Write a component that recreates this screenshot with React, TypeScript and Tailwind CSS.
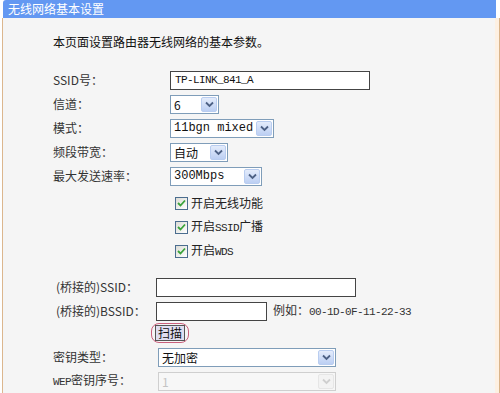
import React from 'react';

const cjk = { fontFamily: '"Noto Sans CJK SC", "Liberation Sans", sans-serif' };
const mono = { fontFamily: '"Liberation Mono", "Noto Sans CJK SC", monospace' };

function Arrow({ disabled = false }: { disabled?: boolean }) {
  return (
    <div
      className={`w-[16px] self-stretch m-[1px] flex items-center justify-center rounded-[2px] border ${
        disabled ? 'border-[#e6e6e6] bg-[#f3f3f3]' : 'border-[#b9cdf0] bg-gradient-to-b from-[#e4ecfb] to-[#bccff3]'
      }`}
    >
      <svg width="9" height="7" viewBox="0 0 9 7">
        <path d="M1 1.5 L4.5 5 L8 1.5" fill="none" stroke={disabled ? '#cfcfcf' : '#4d6185'} strokeWidth="1.8" />
      </svg>
    </div>
  );
}

function Select({ value, w, monoFont = false, disabled = false }: { value: string; w: string; monoFont?: boolean; disabled?: boolean }) {
  return (
    <div
      className={`${w} h-[19px] flex items-stretch border ${disabled ? 'border-[#cfcfcf] bg-[#f7f7f7]' : 'border-[#7f9db9] bg-white'}`}
    >
      <span
        className={`flex-1 pl-[3px] text-[12px] leading-[17px] ${disabled ? 'text-[#c4c4c4]' : 'text-[#111]'}`}
        style={monoFont ? mono : cjk}
      >
        {value}
      </span>
      <Arrow disabled={disabled} />
    </div>
  );
}

function Check({ label }: { label: React.ReactNode }) {
  return (
    <div className="h-[24px] flex items-center pl-[5px] gap-[3px]">
      <div className="w-[13px] h-[13px] border border-[#4b6d8f] bg-gradient-to-br from-[#dcdcd6] to-white flex items-center justify-center">
        <svg width="9" height="8" viewBox="0 0 9 8">
          <path d="M1 4 L3.5 6.5 L8 1.5" fill="none" stroke="#3aa33a" strokeWidth="1.8" />
        </svg>
      </div>
      <span className="text-[12px] text-[#222]" style={cjk}>{label}</span>
    </div>
  );
}

function Row({ label, children, lw = 'w-[117px]' }: { label: React.ReactNode; children: React.ReactNode; lw?: string }) {
  return (
    <div className="h-[24px] flex items-center">
      <span className={`${lw} text-[12px] text-[#333]`} style={cjk}>{label}</span>
      {children}
    </div>
  );
}

export default function App() {
  return (
    <div className="w-[500px] h-[393px] overflow-hidden bg-white flex flex-col">
      <div className="h-[24px] ml-[3px] mr-[4px] bg-[#6398f2] rounded-tl-[3px] flex items-center pl-[5px]">
        <span className="text-[12px] text-white" style={cjk}>无线网络基本设置</span>
      </div>
      <div className="flex-1 flex">
        <div className="w-[3px] border-r border-[#dcb78e]" />
        <div className="flex-1 bg-[#f5f5f5] pl-[50px] flex flex-col">
          <div className="mt-[15px] h-[18px] flex items-center text-[12px] text-[#111]" style={cjk}>
            本页面设置路由器无线网络的基本参数。
          </div>
          <div className="mt-[17px] flex flex-col">
            <Row label="SSID号：">
              <div className="w-[200px] h-[19px] border border-[#444] bg-white pl-[4px] text-[11px] leading-[17px] tracking-[-0.6px] text-[#111]" style={mono}>
                TP-LINK_841_A
              </div>
            </Row>
            <Row label="信道：">
              <Select value="6" w="w-[49px]" />
            </Row>
            <Row label="模式：">
              <Select value="11bgn mixed" w="w-[104px]" monoFont />
            </Row>
            <Row label="频段带宽：">
              <Select value="自动" w="w-[58px]" />
            </Row>
            <Row label="最大发送速率：">
              <Select value="300Mbps" w="w-[92px]" monoFont />
            </Row>
            <div className="pl-[117px] mt-[3px] flex flex-col">
              <Check label="开启无线功能" />
              <Check label={<>开启<span style={mono} className="text-[11px] tracking-[-0.6px]">SSID</span>广播</>} />
              <Check label={<>开启<span style={mono} className="text-[11px] tracking-[-0.6px]">WDS</span></>} />
            </div>
          </div>
          <div className="mt-[12px] flex flex-col pl-[3px]">
            <Row label="(桥接的)SSID：" lw="w-[100px]">
              <div className="w-[200px] h-[19px] border border-[#444] bg-white" />
            </Row>
            <Row label="(桥接的)BSSID：" lw="w-[100px]">
              <div className="w-[111px] h-[19px] border border-[#444] bg-white" />
              <span className="ml-[6px] text-[12px] text-[#333]" style={cjk}>
                例如：<span style={mono} className="text-[11px] tracking-[-0.6px]">00-1D-0F-11-22-33</span>
              </span>
            </Row>
            <div className="h-[20px] flex items-center pl-[95px] mb-[2px]">
              <div className="px-[3px] py-[1px] border border-[#c9607c] rounded-[8px]">
                <div className="h-[16px] px-[2px] border border-[#555] bg-[#e0def0] flex items-center text-[12px] text-[#111]" style={cjk}>
                  扫描
                </div>
              </div>
            </div>
          </div>
          <div className="flex flex-col">
            <Row label="密钥类型：" lw="w-[105px]">
              <Select value="无加密" w="w-[178px]" />
            </Row>
            <Row label={<><span style={mono} className="text-[11px] tracking-[-0.6px]">WEP</span>密钥序号：</>} lw="w-[105px]">
              <Select value="1" w="w-[178px]" disabled />
            </Row>
          </div>
        </div>
        <div className="w-[5px] bg-[#fdf0e2] border-r border-[#d9b48a]" />
      </div>
    </div>
  );
}
